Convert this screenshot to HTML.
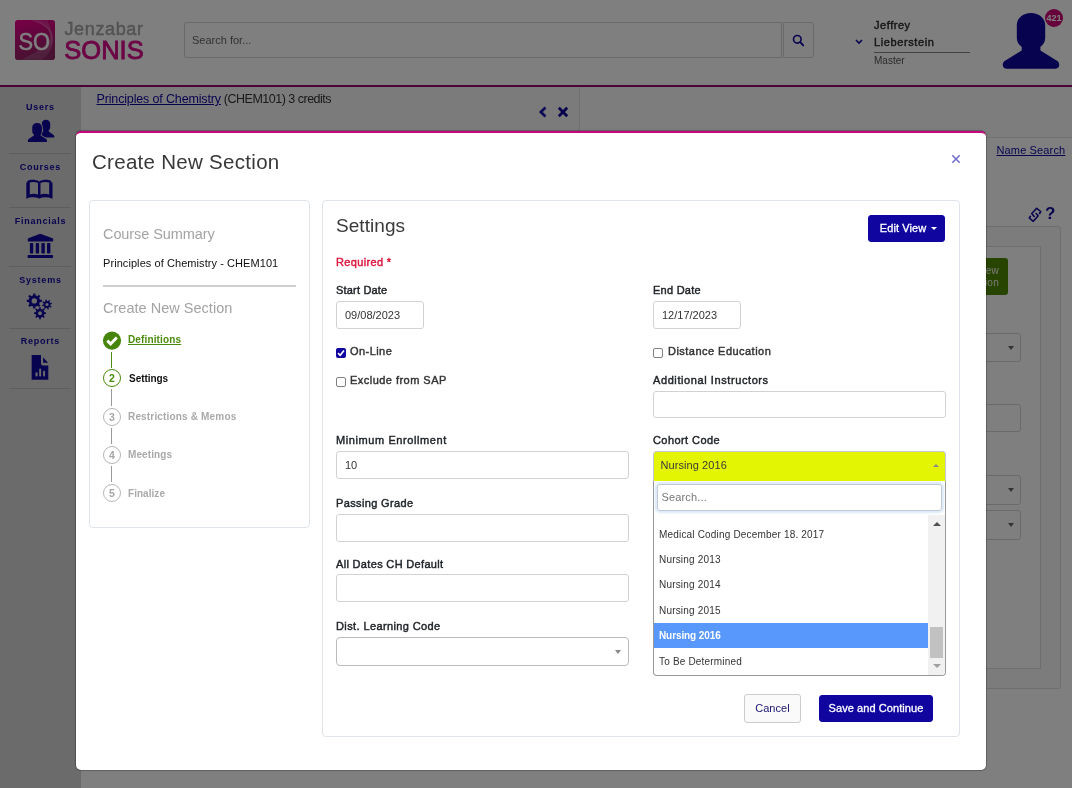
<!DOCTYPE html>
<html>
<head>
<meta charset="utf-8">
<title>Create New Section</title>
<style>
*{box-sizing:border-box;margin:0;padding:0}
html,body{width:1072px;height:788px;overflow:hidden}
body{-webkit-font-smoothing:antialiased;font-family:"Liberation Sans",sans-serif;font-size:12px;color:#212529;background:#fff;position:relative}
.abs{position:absolute}
/* ---------- page behind ---------- */
#page{will-change:transform;position:absolute;left:0;top:0;width:1072px;height:788px;background:#fefefe;overflow:hidden}
#hdr{position:absolute;left:0;top:0;width:1072px;height:87px;background:#fff;border-bottom:2px solid #93076c}
#side{position:absolute;left:0;top:87px;width:81px;height:701px;background:#d6d6d6}
.nav-l{position:absolute;left:0;width:80px;text-align:center;font-weight:bold;font-size:9px;letter-spacing:.75px;color:#10069f;line-height:12px;padding-left:1px}
.sep{position:absolute;left:9px;width:62px;height:1px;background:#bcbcbc}
#overlay{position:absolute;left:0;top:0;width:1072px;height:788px;background:rgba(0,0,0,.5)}
/* ---------- modal ---------- */
#modal{will-change:transform;position:absolute;left:76px;top:131px;width:910px;height:639px;background:#fff;border-radius:5px;border-top:2px solid #c9047f;box-shadow:0 0 0 1px rgba(0,0,0,.2),0 0 3px rgba(0,0,0,.12)}
.card{position:absolute;border:1px solid #dfe3ea;border-radius:4px;background:#fff}
.h{color:#333;font-weight:normal}
.lbl{position:absolute;font-weight:normal;-webkit-text-stroke:.42px;font-size:11px;letter-spacing:.3px;color:#212529;line-height:14px;white-space:nowrap}
.inp{position:absolute;height:28px;border:1px solid #d2d2d2;border-radius:3px;background:#fff;font-size:11px;line-height:26px;padding-left:8px;color:#333}
.btn{position:absolute;border-radius:3px;font-size:11px;letter-spacing:.08px;text-align:center;white-space:nowrap}
.btn-p{background:#10069f;color:#fff;border:1px solid #10069f;-webkit-text-stroke:.3px}
.stepc{position:absolute;left:27px;width:18px;height:18px;border:1.5px solid #b5b5b5;border-radius:9px;font-size:10.5px;font-weight:bold;line-height:16.4px;text-align:center;color:#a5a5a5;background:#fff}
.stepl{position:absolute;left:52px;font-size:10px;font-weight:bold;line-height:14px;color:#a9a9a9;white-space:nowrap;letter-spacing:.17px}
.cbx{position:absolute;width:10px;height:10px;border:1px solid #808080;border-radius:2px;background:#fff}
.cb{color:#333}
.opt{position:absolute;left:5px;font-size:10px;line-height:12px;color:#333;white-space:nowrap;letter-spacing:.18px}
.selb{position:absolute;left:940px;width:81px;border:1px solid #d4d4d4;border-radius:3px;background:#fff}
.selb i{position:absolute;right:6px;top:50%;margin-top:-2px;width:0;height:0;border-left:3.5px solid transparent;border-right:3.5px solid transparent;border-top:4.5px solid #666}
</style>
</head>
<body>
<div id="page">
  <div id="hdr">
    <!-- logo -->
    <svg class="abs" style="left:15px;top:20px" width="40" height="40" viewBox="0 0 40 40">
      <defs><linearGradient id="lg" x1="0" y1="0" x2="0.25" y2="1"><stop offset="0" stop-color="#f0008e"/><stop offset=".45" stop-color="#c40c7a"/><stop offset="1" stop-color="#8e2664"/></linearGradient><clipPath id="lc"><rect x="0" y="0" width="40" height="40" rx="2.8"/></clipPath></defs>
      <rect x="0" y="0" width="40" height="40" rx="2.8" fill="url(#lg)"/>
      <g clip-path="url(#lc)" fill="none" stroke="#fff" stroke-width=".55" opacity=".3"><path d="M17.0 0 Q60.0 15.0 7.0 40"/><path d="M18.6 0 Q58.4 16.2 9.1 40"/><path d="M20.2 0 Q56.8 17.4 11.2 40"/><path d="M21.8 0 Q55.2 18.6 13.3 40"/><path d="M23.4 0 Q53.6 19.8 15.4 40"/><path d="M25.0 0 Q52.0 21.0 17.5 40"/><path d="M26.6 0 Q50.4 22.2 19.6 40"/><path d="M28.2 0 Q48.8 23.4 21.7 40"/><path d="M29.8 0 Q47.2 24.6 23.8 40"/><path d="M31.4 0 Q45.6 25.8 25.9 40"/></g>
      <text x="3.4" y="29.6" font-family="Liberation Sans, sans-serif" font-size="23" fill="#fff" stroke="#fff" stroke-width=".45" textLength="31.6" lengthAdjust="spacingAndGlyphs">SO</text>
    </svg>
    <div class="abs" style="left:64.5px;top:16.7px;font-size:18px;line-height:24px;color:#a4a4a8;-webkit-text-stroke:.4px;letter-spacing:.62px">Jenzabar</div>
    <div class="abs" style="left:64.3px;top:35px;font-size:25.5px;line-height:30px;color:#d80a8a;-webkit-text-stroke:.85px;letter-spacing:0px">SONIS</div>
    <!-- search -->
    <div class="abs" style="left:184px;top:22px;width:598px;height:36px;border:1px solid #d2d2d2;border-radius:3px 0 0 3px;background:#fff;font-size:11px;line-height:34px;padding-left:7px;color:#666">Search for...</div>
    <div class="abs" style="left:783px;top:22px;width:31px;height:36px;border:1px solid #d2d2d2;border-radius:0 3px 3px 0;background:#fdfdfd"></div>
    <svg class="abs" style="left:791px;top:33px" width="14" height="14" viewBox="0 0 14 14"><circle cx="6.3" cy="6.3" r="3.8" fill="none" stroke="#10069f" stroke-width="1.6"/><path d="M9.2 9.2 L12.2 12.4" stroke="#10069f" stroke-width="1.9" stroke-linecap="round"/></svg>
    <!-- user -->
    <svg class="abs" style="left:855px;top:39px" width="8" height="6" viewBox="0 0 8 6"><path d="M1 1 L4 4 L7 1" fill="none" stroke="#10069f" stroke-width="1.6"/></svg>
    <div class="abs" style="left:874px;top:18px;font-size:11px;-webkit-text-stroke:.42px;line-height:14px;color:#2c2c2c;letter-spacing:.55px">Jeffrey</div>
    <div class="abs" style="left:874px;top:35px;font-size:11px;-webkit-text-stroke:.42px;line-height:14px;color:#2c2c2c;letter-spacing:.6px">Lieberstein</div>
    <div class="abs" style="left:874px;top:52px;width:96px;height:1px;background:#858585"></div>
    <div class="abs" style="left:874px;top:55px;font-size:10px;line-height:12px;color:#555">Master</div>
    <svg class="abs" style="left:1002px;top:12px" width="58" height="58" viewBox="0 0 58 58">
      <path d="M29 0.9 C21 0.9 14.8 6 14.8 13 L14.8 26 C14.8 30 17 33 19.7 34.8 L19.7 38.6 L3 48.8 C1.5 49.8 0.8 51 0.8 52.5 L0.8 53 C0.8 55.5 2.5 56.8 5 56.8 L53 56.8 C55.5 56.8 57.2 55.5 57.2 53 L57.2 52.5 C57.2 51 56.5 49.8 55 48.8 L38.4 38.6 L38.4 34.8 C41 33 43.2 30 43.2 26 L43.2 13 C43.2 6 37 0.9 29 0.9 Z" fill="#10069f"/>
    </svg>
    <div class="abs" style="left:1045px;top:9px;width:18px;height:18px;border-radius:9px;background:#cc0074;color:#fff;font-size:9px;font-weight:bold;line-height:18px;text-align:center;letter-spacing:0">421</div>
  </div>
  <div id="side"></div>
  <!-- sidebar items (page coords) -->
  <div class="nav-l" style="top:101px">Users</div>
  <svg class="abs" style="left:27px;top:119px" width="28" height="24" viewBox="0 0 28 24">
    <path d="M19 0.8 C16.3 0.8 14.8 2.6 14.8 5 L14.8 8 C14.8 9.6 15.4 10.6 16.2 11.3 L16.2 12.2 L11 15.6 L11 18.4 L27.3 18.4 L27.3 17.2 C27.3 16.6 27 16.2 26.5 15.9 L21.8 12.4 L21.8 11.3 C22.6 10.6 23.2 9.6 23.2 8 L23.2 5 C23.2 2.6 21.7 0.8 19 0.8 Z" fill="#10069f"/>
    <path d="M10.1 4 C7 4 5.25 6 5.25 8.5 L5.25 12 C5.25 13.8 5.9 14.8 6.9 15.6 L6.9 16.6 L1.6 20 C1 20.4 0.9 20.9 0.9 21.5 L0.9 22.9 L19.9 22.9 L19.9 21.5 C19.9 20.9 19.8 20.4 19.2 20 L13.6 16.6 L13.6 15.6 C14.4 14.8 14.9 13.8 14.9 12 L14.9 8.5 C14.9 6 13.2 4 10.1 4 Z" fill="#10069f" stroke="#d6d6d6" stroke-width="1.7" paint-order="stroke"/>
  </svg>
  <div class="sep" style="top:153px"></div>
  <div class="nav-l" style="top:161px">Courses</div>
  <svg class="abs" style="left:26px;top:179px" width="27" height="21" viewBox="0 0 27 21">
    <path fill-rule="evenodd" fill="#10069f" d="M0.3 3.4 L1.3 3.4 L1.3 2 C4 0.4 9.5 0.4 13.25 2.4 C17 0.4 22.5 0.4 25.2 2 L25.2 3.4 L26.5 3.4 L26.5 19.7 C22 17.9 17 17.9 13.25 19.4 C9.5 17.9 4.5 17.9 0.3 19.7 Z M3.8 3.6 C6 2.9 9.5 2.9 12 4 L12 15.4 C9.5 14.6 6 14.6 3.8 15.4 Z M14.5 4 C17 2.9 20.5 2.9 23.2 3.6 L23.2 15.4 C20.5 14.6 17 14.6 14.5 15.4 Z"/>
  </svg>
  <div class="sep" style="top:207px"></div>
  <div class="nav-l" style="top:215px">Financials</div>
  <svg class="abs" style="left:27px;top:233px" width="27" height="26" viewBox="0 0 27 26">
    <path d="M13.2 0.8 L25.6 5.2 C26.2 5.5 26.2 6 26.2 6.5 L26.2 7.6 C26.2 8.2 25.8 8.5 25.2 8.5 L1.6 8.5 C1 8.5 0.7 8.2 0.7 7.6 L0.7 6.5 C0.7 6 0.8 5.5 1.4 5.2 Z" fill="#10069f"/>
    <rect x="2.9" y="9.9" width="3.3" height="10.6" rx=".8" fill="#10069f"/><rect x="8.75" y="9.9" width="3.3" height="10.6" rx=".8" fill="#10069f"/><rect x="14.4" y="9.9" width="3.4" height="10.6" rx=".8" fill="#10069f"/><rect x="20" y="9.9" width="3.4" height="10.6" rx=".8" fill="#10069f"/>
    <rect x="0.6" y="22" width="25.5" height="3" rx=".8" fill="#10069f"/>
  </svg>
  <div class="sep" style="top:266px"></div>
  <div class="nav-l" style="top:274px">Systems</div>
  <svg class="abs" style="left:26px;top:292px" width="28" height="28" viewBox="0 0 28 28"><path fill-rule="evenodd" fill="#10069f" d="M9.41 14.49 L9.37 16.42 L7.23 16.42 L7.19 14.49 L6.12 14.17 L5.13 13.64 L3.74 14.98 L2.22 13.46 L3.56 12.07 L3.03 11.08 L2.71 10.01 L0.78 9.97 L0.78 7.83 L2.71 7.79 L3.03 6.72 L3.56 5.73 L2.22 4.34 L3.74 2.82 L5.13 4.16 L6.12 3.63 L7.19 3.31 L7.23 1.38 L9.37 1.38 L9.41 3.31 L10.48 3.63 L11.47 4.16 L12.86 2.82 L14.38 4.34 L13.04 5.73 L13.57 6.72 L13.89 7.79 L15.82 7.83 L15.82 9.97 L13.89 10.01 L13.57 11.08 L13.04 12.07 L14.38 13.46 L12.86 14.98 L11.47 13.64 L10.48 14.17 Z M11.00 8.90 A2.7 2.7 0 1 0 5.60 8.90 A2.7 2.7 0 1 0 11.00 8.90 Z M24.29 13.69 L25.60 14.45 L24.88 15.66 L23.59 14.86 L23.08 15.32 L22.49 15.67 L22.87 17.14 L21.51 17.47 L21.16 16.00 L20.48 15.96 L19.81 15.79 L19.05 17.10 L17.84 16.38 L18.64 15.09 L18.18 14.58 L17.83 13.99 L16.36 14.37 L16.03 13.01 L17.50 12.66 L17.54 11.98 L17.71 11.31 L16.40 10.55 L17.12 9.34 L18.41 10.14 L18.92 9.68 L19.51 9.33 L19.13 7.86 L20.49 7.53 L20.84 9.00 L21.52 9.04 L22.19 9.21 L22.95 7.90 L24.16 8.62 L23.36 9.91 L23.82 10.42 L24.17 11.01 L25.64 10.63 L25.97 11.99 L24.50 12.34 L24.46 13.02 Z M22.60 12.50 A1.6 1.6 0 1 0 19.40 12.50 A1.6 1.6 0 1 0 22.60 12.50 Z M14.86 25.52 L14.85 27.14 L13.15 27.14 L13.14 25.52 L12.32 25.27 L11.56 24.86 L10.40 26.00 L9.20 24.80 L10.34 23.64 L9.93 22.88 L9.68 22.06 L8.06 22.05 L8.06 20.35 L9.68 20.34 L9.93 19.52 L10.34 18.76 L9.20 17.60 L10.40 16.40 L11.56 17.54 L12.32 17.13 L13.14 16.88 L13.15 15.26 L14.85 15.26 L14.86 16.88 L15.68 17.13 L16.44 17.54 L17.60 16.40 L18.80 17.60 L17.66 18.76 L18.07 19.52 L18.32 20.34 L19.94 20.35 L19.94 22.05 L18.32 22.06 L18.07 22.88 L17.66 23.64 L18.80 24.80 L17.60 26.00 L16.44 24.86 L15.68 25.27 Z M16.00 21.20 A2.0 2.0 0 1 0 12.00 21.20 A2.0 2.0 0 1 0 16.00 21.20 Z"/></svg>
  <div class="sep" style="top:328px"></div>
  <div class="nav-l" style="top:335px">Reports</div>
  <svg class="abs" style="left:31px;top:355px" width="18" height="25" viewBox="0 0 18 25">
    <path d="M0.65 0 L10 0 L10 8.6 C10 9.8 10.6 10.4 11.8 10.4 L17.3 10.4 L17.3 24.7 L0.65 24.7 Z M12.1 2.3 L12.1 7.8 L17 7.8 Z" fill="#10069f"/>
    <rect x="4.5" y="17.2" width="2.1" height="4.3" rx=".9" fill="#d6d6d6"/><rect x="8.2" y="13.5" width="1.9" height="8" rx=".9" fill="#d6d6d6"/><rect x="12.1" y="15.8" width="1.9" height="5.7" rx=".9" fill="#d6d6d6"/>
  </svg>
  <div class="sep" style="top:388px"></div>
  <!-- content behind -->
  <div class="abs" style="left:81px;top:87px;width:991px;height:51px;background:#fbfbfb;border-bottom:1px solid #e4e4e4"></div>
  <div class="abs" style="left:81px;top:87px;width:499px;height:50px;background:#f7f7f7;border-right:1px solid #e0e0e0"></div>
  <div class="abs" style="left:96.5px;top:92px;font-size:12.5px;line-height:14px;color:#333;white-space:nowrap;letter-spacing:-.15px"><span style="color:#10069f;text-decoration:underline">Principles of Chemistry</span><span style="letter-spacing:-.5px"> (CHEM101) 3 credits</span></div>
  <svg class="abs" style="left:538px;top:106px" width="10" height="12" viewBox="0 0 10 12"><path d="M7.5 1.5 L2.8 6 L7.5 10.5" fill="none" stroke="#10069f" stroke-width="2.6"/></svg>
  <svg class="abs" style="left:557px;top:106px" width="12" height="12" viewBox="0 0 12 12"><path d="M1.8 1.8 L10.2 10.2 M10.2 1.8 L1.8 10.2" fill="none" stroke="#10069f" stroke-width="2.8"/></svg>
  <!-- right tools + panels -->
  <svg class="abs" style="left:1028px;top:207px" width="15" height="16" viewBox="0 0 15 16"><g fill="none" stroke="#10069f" stroke-width="1.6" stroke-linejoin="round" stroke-linecap="round"><path d="M6.1 9.5 L3.8 6.5 L8.7 1.3 L12.7 4.5 L11.6 6.5"/><path d="M8.1 6.5 L10.2 8.8 L5.3 14.3 L1.3 11 L2.4 9.3"/></g></svg>
  <div id="qm" class="abs" style="left:1045px;top:204px;font-size:17px;font-weight:bold;line-height:20px;color:#10069f">?</div>
  <div class="abs" style="left:960px;top:226px;width:101px;height:463px;background:#f8f8f8;border:1px solid #dcdcdc;border-radius:3px"></div>
  <div class="abs" style="left:960px;top:246px;width:81px;height:423px;background:#fff;border:1px solid #dcdcdc"></div>
  <div class="abs" style="left:940px;top:258px;width:68px;height:37px;background:#508a00;border-radius:3px;color:#f4f4f4;font-size:10px;line-height:12px;text-align:right;padding:6.5px 9px 0 0;letter-spacing:.25px">New<br>Section</div>
  <div class="selb" style="top:333px;height:29px"><i></i></div>
  <div class="selb" style="top:404px;height:28px"></div>
  <div class="selb" style="top:475px;height:30px"><i></i></div>
  <div class="selb" style="top:510px;height:30px"><i></i></div>
  <div id="ns" class="abs" style="left:996.5px;top:143px;font-size:11px;line-height:14px;color:#10069f;text-decoration:underline;white-space:nowrap;letter-spacing:.14px">Name Search</div>
  
</div>
<div id="overlay"></div>
<div id="modal">
  <!-- coordinates inside modal: page x-76, page y-133 (content box starts after 2px top border) -->
  <div id="mtitle" class="abs h" style="left:16px;top:16px;font-size:20.5px;line-height:26px;white-space:nowrap;letter-spacing:.29px;color:#383838">Create New Section</div>
  <svg class="abs" style="left:875px;top:20.6px" width="10" height="10" viewBox="0 0 10 10"><path d="M1.3 1.3 L8.7 8.7 M8.7 1.3 L1.3 8.7" stroke="#7470ca" stroke-width="1.6" fill="none"/></svg>

  <!-- left card -->
  <div class="card" style="left:13px;top:67px;width:221px;height:328px"></div>
  <div id="t_cs" class="abs" style="left:27px;top:91px;font-size:14.5px;line-height:20px;color:#a3a3a3;white-space:nowrap;letter-spacing:-.09px">Course Summary</div>
  <div id="t_pc" class="abs" style="left:27px;top:123px;font-size:11px;letter-spacing:.07px;line-height:14px;color:#111;white-space:nowrap">Principles of Chemistry - CHEM101</div>
  <div class="abs" style="left:27px;top:152px;width:193px;height:2px;background:#cfcfcf"></div>
  <div id="t_cns" class="abs" style="left:27px;top:165px;font-size:14.5px;line-height:20px;color:#a3a3a3;white-space:nowrap;letter-spacing:.02px">Create New Section</div>

  <!-- steps -->
  <div class="abs" style="left:34.7px;top:218.5px;width:1.5px;height:16.5px;background:#4a8a0c"></div>
  <div class="abs" style="left:35px;top:256px;width:1px;height:17px;background:#9a9a9a"></div>
  <div class="abs" style="left:35px;top:295px;width:1px;height:16px;background:#9a9a9a"></div>
  <div class="abs" style="left:35px;top:333px;width:1px;height:16px;background:#9a9a9a"></div>
  <svg class="abs" style="left:26px;top:198px" width="20" height="20" viewBox="0 0 20 20"><circle cx="10" cy="9.6" r="9.1" fill="#47850a"/><path d="M5.3 9.6 L8.6 12.9 L14.8 6.6" stroke="#fff" stroke-width="2.9" fill="none"/></svg>
  <div class="stepc" style="top:236px;border-color:#4a8a0c;color:#4a8a0c">2</div>
  <div class="stepc" style="top:275px">3</div>
  <div class="stepc" style="top:313px">4</div>
  <div class="stepc" style="top:351px">5</div>
  <div id="s1" class="stepl" style="letter-spacing:0.14px;top:200px;color:#4a8a0c;text-decoration:underline">Definitions</div>
  <div id="s2" class="stepl" style="letter-spacing:-0.04px;top:239px;left:53px;color:#111">Settings</div>
  <div id="s3" class="stepl" style="letter-spacing:0.17px;top:277px">Restrictions &amp; Memos</div>
  <div id="s4" class="stepl" style="letter-spacing:0.09px;top:315px">Meetings</div>
  <div id="s5" class="stepl" style="letter-spacing:0.04px;top:354px">Finalize</div>

  <!-- right card -->
  <div class="card" style="left:246px;top:67px;width:638px;height:537px"></div>
  <div id="t_set" class="abs h" style="left:260px;top:81px;font-size:19px;line-height:24px;letter-spacing:.06px;color:#3a3a3a">Settings</div>
  <div class="btn btn-p" style="left:792px;top:82px;width:77px;height:27px;line-height:25px;padding-right:7px"><span id="t_ev">Edit View</span><span class="abs" style="left:62px;top:11px;width:0;height:0;border-left:3px solid transparent;border-right:3px solid transparent;border-top:3px solid #fff"></span></div>
  <div id="t_req" class="lbl" style="letter-spacing:0.34px;left:260px;top:122px;color:#dc143c">Required *</div>

  <div id="l_sd" class="lbl" style="letter-spacing:0.19px;left:260px;top:150px">Start Date</div>
  <div class="inp" style="left:260px;top:168px;width:88px"><span id="v_sd">09/08/2023</span></div>
  <div id="l_ed" class="lbl" style="letter-spacing:0.25px;left:577px;top:150px">End Date</div>
  <div class="inp" style="left:577px;top:168px;width:88px"><span id="v_ed">12/17/2023</span></div>

  <div class="abs" style="left:260px;top:215px;width:10px;height:10px;border-radius:2px;background:#10069f"><svg class="abs" style="left:0;top:0" width="10" height="10" viewBox="0 0 10 10"><path d="M2 5.2 L4.2 7.3 L8 2.6" stroke="#fff" stroke-width="1.6" fill="none"/></svg></div>
  <div id="l_ol" class="lbl cb" style="letter-spacing:0.44px;left:274px;top:211px">On-Line</div>
  <div class="cbx" style="left:577px;top:215px"></div>
  <div id="l_de" class="lbl cb" style="letter-spacing:0.47px;left:592px;top:211px">Distance Education</div>
  <div class="cbx" style="left:260px;top:244px"></div>
  <div id="l_ex" class="lbl cb" style="letter-spacing:0.47px;left:274px;top:240px">Exclude from SAP</div>
  <div id="l_ai" class="lbl" style="letter-spacing:0.59px;left:577px;top:240px">Additional Instructors</div>
  <div class="inp" style="left:577px;top:258px;width:293px;height:27px"></div>

  <div id="l_me" class="lbl" style="letter-spacing:0.59px;left:260px;top:300px">Minimum Enrollment</div>
  <div class="inp" style="left:260px;top:318px;width:293px"><span id="v_me">10</span></div>
  <div id="l_pg" class="lbl" style="letter-spacing:0.36px;left:260px;top:363px">Passing Grade</div>
  <div class="inp" style="left:260px;top:381px;width:293px"></div>
  <div id="l_ad" class="lbl" style="letter-spacing:0.33px;left:260px;top:424.4px">All Dates CH Default</div>
  <div class="inp" style="left:260px;top:441px;width:293px"></div>
  <div id="l_dl" class="lbl" style="letter-spacing:0.39px;left:260px;top:486.4px">Dist. Learning Code</div>
  <div class="inp" style="left:260px;top:504px;width:293px;height:29px;border-color:#bbb;border-radius:4px"><span class="abs" style="left:278px;top:12px;width:0;height:0;border-left:3.5px solid transparent;border-right:3.5px solid transparent;border-top:4px solid #888"></span></div>

  <!-- cohort -->
  <div id="l_cc" class="lbl" style="letter-spacing:0.42px;left:577px;top:300px">Cohort Code</div>
  <div class="abs" style="left:577px;top:318px;width:293px;height:30px;background:#e4f503;border:1px solid #c3c8d2;border-bottom:none;border-radius:4px 4px 0 0;font-size:11px;line-height:27px;padding-left:6.5px;letter-spacing:.08px;color:#3a3a3a"><span id="v_cc">Nursing 2016</span><span class="abs" style="left:279px;top:12.4px;width:0;height:0;border-left:3px solid transparent;border-right:3px solid transparent;border-bottom:3.6px solid #888"></span></div>
  <div id="dd" class="abs" style="left:577px;top:348px;width:293px;height:195px;background:#fff;border:1px solid #999;border-top:none;border-radius:0 0 4px 4px;overflow:hidden">
    <div class="abs" style="left:3px;top:3px;width:285px;height:27px;border:1px solid #c4c8d0;border-radius:3px;box-shadow:0 0 2px 2px rgba(110,170,240,.25);font-size:11px;line-height:25px;padding-left:3.5px;color:#777;letter-spacing:.15px">Search...</div>
    <div class="abs" style="left:274px;top:34px;width:18px;height:161px;background:#f1f1f1"></div>
    <div class="abs" style="left:276px;top:145.5px;width:13px;height:31px;background:#c1c1c1"></div>
    <span class="abs" style="left:278.5px;top:41px;width:0;height:0;border-left:4px solid transparent;border-right:4px solid transparent;border-bottom:4.5px solid #505050"></span>
    <span class="abs" style="left:278.5px;top:183px;width:0;height:0;border-left:4px solid transparent;border-right:4px solid transparent;border-top:4.5px solid #a0a0a0"></span>
    <div class="abs" style="left:0;top:142px;width:274px;height:25px;background:#5897fb"></div>
    <div id="o1" class="opt" style="top:48px">Medical Coding December 18. 2017</div>
    <div id="o2" class="opt" style="top:73px">Nursing 2013</div>
    <div id="o3" class="opt" style="top:98px">Nursing 2014</div>
    <div id="o4" class="opt" style="top:124px">Nursing 2015</div>
    <div id="o5" class="opt" style="top:149px;color:#fff;font-weight:bold;letter-spacing:-.1px">Nursing 2016</div>
    <div id="o6" class="opt" style="top:175px">To Be Determined</div>
  </div>

  <!-- footer buttons -->
  <div class="btn" style="left:668px;top:561px;width:57px;height:29px;line-height:27px;border:1px solid #ccc;background:#fafafa;color:#1a1570"><span id="t_ca">Cancel</span></div>
  <div class="btn btn-p" style="left:743px;top:562px;width:114px;height:27px;line-height:25px"><span id="t_sc">Save and Continue</span></div>
</div>
</body>
</html>
